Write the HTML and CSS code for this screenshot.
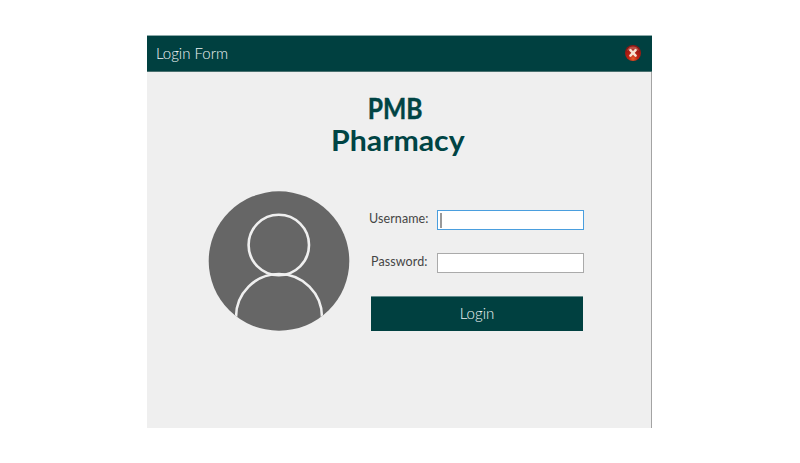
FILE: index.html
```html
<!DOCTYPE html>
<html lang="en">
<head>
<meta charset="utf-8">
<title>Login Form</title>
<link rel="stylesheet" href="styles.css">
</head>
<body>
<main class="window">
  <header class="titlebar">
    <span class="caption">Login Form</span>
    <button class="close" type="button" aria-label="Close">
      <svg width="18" height="18" viewBox="0 0 18 18">
        <defs><radialGradient id="red" cx=".5" cy=".85" r=".7"><stop offset="0" stop-color="#e8602a"/><stop offset=".4" stop-color="#c02414"/><stop offset="1" stop-color="#8f1512"/></radialGradient></defs>
        <circle cx="9" cy="9" r="8" fill="url(#red)"/>
        <path d="M3 6.8a6.3 6.3 0 0 1 12 0Q9 4.2 3 6.8Z" fill="#e08a78" opacity=".5"/>
        <path d="M6.4 6.2l5.2 5.4M11.6 6.2l-5.2 5.4" stroke="#f8e4d2" stroke-width="2.5" stroke-linecap="round"/>
      </svg>
    </button>
  </header>
  <h1 class="brand"><span class="short">PMB</span><span class="long">Pharmacy</span></h1>
  <div class="content">
    <svg class="avatar" width="142" height="140" viewBox="0 0 142 140">
      <defs><clipPath id="disc"><ellipse cx="71" cy="70" rx="70.3" ry="69.7"/></clipPath></defs>
      <ellipse cx="71" cy="70" rx="70.3" ry="69.7" fill="#666"/>
      <g clip-path="url(#disc)" fill="none" stroke="#efefef" stroke-width="2.6">
        <circle cx="70.8" cy="54" r="30.2"/>
        <path d="M28 128V126a43 43 0 0 1 86 0v2"/>
      </g>
    </svg>
    <form class="form">
      <label class="row"><span class="label user">Username:</span><span class="field focused"><i class="caret"></i></span></label>
      <label class="row"><span class="label pass">Password:</span><span class="field"></span></label>
      <button class="login" type="button">Login</button>
    </form>
  </div>
</main>
</body>
</html>
```
FILE: styles.css
```css
* { box-sizing: border-box; }
body { margin: 0; padding: 35px 0 0 147px; background: #fff; font-family: "Century Gothic", "URW Gothic", Lato, sans-serif; }
.window { width: 505px; height: 393px; background: #efefef; border-right: 1px solid #a3a3a3; }
.titlebar { display: flex; align-items: center; justify-content: space-between; height: 37px; width: 505px; padding: 0 10px 2px 9px; background: #004040; border-bottom: 1px solid #49706f; border-top: 1px solid #8daaaa; color: #eef4f4; }
.caption { font-size: 15px; font-weight: 300; letter-spacing: 0; }
.close { display: flex; width: 18px; height: 18px; padding: 0; border: 0; background: none; }
.brand { display: flex; flex-direction: column; align-items: center; margin: 20px 0 0; padding-right: 3px; color: #004444; font-size: 28px; line-height: 32px; font-weight: 700; }
.short { margin-right: 4px; transform: scaleX(.88); -webkit-text-stroke: .4px #004444; }
.long { transform: scaleX(1.08); }
.content { display: flex; margin: 35px 0 0 61px; }
.avatar { flex: none; }
.form { display: flex; flex-direction: column; width: 234px; padding-top: 19px; margin-left: 14px; }
.row { display: flex; align-items: flex-start; justify-content: space-between; height: 20px; margin: 0 14px 23px 5px; }
.label { font-size: 12.5px; line-height: 18px; letter-spacing: .1px; color: #454545; }
.pass { margin-left: 2px; }
.field { display: flex; width: 147px; height: 20px; padding: 2px; background: #fff; border: 1px solid #aaa; }
.field.focused { border-color: #4a9ede; }
.caret { width: 2px; height: 15px; background: #999; }
.login { width: 212px; height: 35px; margin: 0 0 0 7px; padding: 0 0 3px; border: 0; border-top: 1px solid #648c8c; background: #004040; color: #eef4f4; font: 300 15px "Century Gothic", "URW Gothic", Lato, sans-serif; }
```
